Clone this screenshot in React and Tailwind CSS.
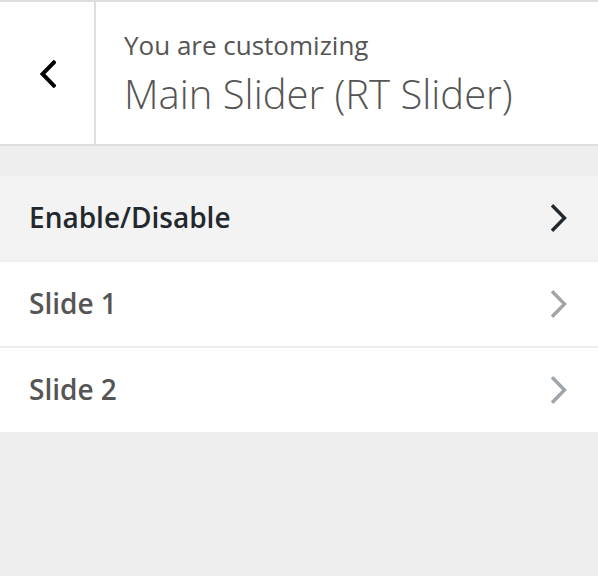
import React from 'react';

const Chevron = ({ dir = 'right', w = 3.4 }) => (
  <svg width="16" height="28" viewBox="0 0 16 28" fill="none">
    {dir === 'right' ? (
      <polyline points="2.2,2.5 13.5,14 2.2,25.5" stroke="currentColor" strokeWidth={w} strokeLinecap="square" strokeLinejoin="miter" />
    ) : (
      <polyline points="13.8,2.5 2.5,14 13.8,25.5" stroke="currentColor" strokeWidth={w} strokeLinecap="square" strokeLinejoin="miter" />
    )}
  </svg>
);

const sections = [
  { title: 'Enable/Disable', active: true },
  { title: 'Slide 1' },
  { title: 'Slide 2' },
];

export default function App() {
  return (
    <div className="min-h-screen w-full bg-[#eeeeee] font-['Open_Sans',sans-serif]">
      {/* header */}
      <div className="flex h-[146px] border-t-2 border-b-2 border-[#dddddd] bg-white">
        <button className="flex w-[96px] shrink-0 items-center justify-center border-r-2 border-[#dddddd] pl-[2px] pt-[2px] text-black">
          <Chevron dir="left" w={4} />
        </button>
        <div className="pl-[28px] pt-[28px] text-[#555555]">
          <div className="text-[26px] leading-[31px]">You are customizing</div>
          <div className="mt-[9px] text-[40px] font-light leading-[48px]">Main Slider (RT Slider)</div>
        </div>
      </div>

      <div className="pt-[30px]">
        {sections.map((s) => (
          <div
            key={s.title}
            className={`flex h-[86px] items-center justify-between border-b-2 border-[#eeeeee] pl-[29px] pr-[31px] last:h-[84px] last:border-b-0 ${
              s.active ? 'bg-[#f3f3f3] text-[#23282d]' : 'bg-white text-[#555555]'
            }`}
          >
            <h3 className="-mt-[2px] text-[28px] font-semibold leading-[38px]">{s.title}</h3>
            <span className={s.active ? 'text-[#23282d]' : 'text-[#a0a5aa]'}>
              <Chevron />
            </span>
          </div>
        ))}
      </div>
    </div>
  );
}
